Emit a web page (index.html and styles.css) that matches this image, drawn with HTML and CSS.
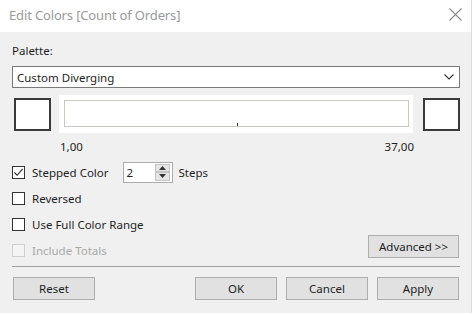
FILE: index.html
```html
<!DOCTYPE html>
<html>
<head>
    <meta charset="utf-8">
    <title>Edit Colors</title>
    <link rel="stylesheet" href="styles.css">
</head>
<body>
    <div class="window">
        <div class="titlebar">
            <span class="title">Edit Colors [Count of Orders]</span>
            <svg class="close" width="13" height="13" viewBox="0 0 13 13">
                <path d="M0.5 0.5 L12.5 12.5 M12.5 0.5 L0.5 12.5" stroke="#8a8a8a" stroke-width="1.1" fill="none"/>
            </svg>
        </div>

        <div class="content">
            <div class="label">Palette:</div>
            <div class="select">
                <span>Custom Diverging</span>
                <svg width="10" height="6" viewBox="0 0 10 6">
                    <path d="M0.5 0.5 L5 5 L9.5 0.5" stroke="#333" stroke-width="1.1" fill="none"/>
                </svg>
            </div>

            <div class="ramp-row">
                <div class="swatch"></div>
                <div class="ramp">
                    <div class="ramp-inner"><span class="tick"></span></div>
                </div>
                <div class="swatch"></div>
            </div>

            <div class="range-labels">
                <span>1,00</span>
                <span>37,00</span>
            </div>

            <div class="option stepped">
                <span class="box checked">
                    <svg width="11" height="11" viewBox="0 0 11 11">
                        <path d="M1.5 5.5 L4.2 8.3 L9.6 1.8" stroke="#222" stroke-width="1.1" fill="none"/>
                    </svg>
                </span>
                <span>Stepped Color</span>
                <div class="spin">
                    <span class="spin-value">2</span>
                    <div class="spin-buttons">
                        <span class="spin-btn"><svg width="7" height="4" viewBox="0 0 7 4"><path d="M0 4 L3.5 0 L7 4 Z" fill="#333"/></svg></span>
                        <span class="spin-btn"><svg width="7" height="4" viewBox="0 0 7 4"><path d="M0 0 L3.5 4 L7 0 Z" fill="#333"/></svg></span>
                    </div>
                </div>
                <span>Steps</span>
            </div>

            <div class="option">
                <span class="box"></span>
                <span>Reversed</span>
            </div>

            <div class="option">
                <span class="box"></span>
                <span>Use Full Color Range</span>
            </div>

            <div class="option last">
                <div class="disabled">
                    <span class="box"></span>
                    <span>Include Totals</span>
                </div>
                <button class="btn advanced">Advanced &gt;&gt;</button>
            </div>

            <div class="separator"></div>

            <div class="buttons">
                <button class="btn">Reset</button>
                <div class="spacer"></div>
                <button class="btn">OK</button>
                <button class="btn">Cancel</button>
                <button class="btn">Apply</button>
            </div>
        </div>
    </div>
</body>
</html>
```

FILE: styles.css
```css
body {
    margin: 0;
    background: #ffffff;
    font-family: 'Noto Sans', 'Open Sans', sans-serif;
    font-size: 11.5px;
    color: #1e1e1e;
}

.window {
    width: 471px;
    height: 313px;
    display: flex;
    flex-direction: column;
    background: #f0f0f0;
    border-right: 1px solid #dcdcdc;
}

.titlebar {
    height: 32px;
    background: #ffffff;
    display: flex;
    align-items: center;
    justify-content: space-between;
    padding: 0 9px 0 9px;
}

.title {
    font-size: 13px;
    letter-spacing: -0.15px;
    color: #9a9a9a;
    margin-top: -2px;
}

.close {
    margin-top: -3px;
}

.content {
    display: flex;
    flex-direction: column;
    padding: 0 11px 0 12px;
}

.label {
    height: 16px;
    line-height: 16px;
    margin-top: 11px;
}

.select {
    margin-top: 7px;
    height: 20px;
    border: 1px solid #7a7a7a;
    background: #ffffff;
    display: flex;
    align-items: center;
    justify-content: space-between;
    padding: 0 5px 0 4px;
}

.ramp-row {
    display: flex;
    align-items: center;
    margin-top: 7px;
    height: 38px;
}

.swatch {
    width: 33px;
    height: 29px;
    border: 2px solid #3a3a3a;
    background: #ffffff;
}

.swatch:first-child {
    margin-left: 2px;
}

.ramp {
    width: 345px;
    height: 27px;
    background: #ffffff;
    padding: 5px 4px 6px 5px;
    margin: 0 10px 0 8px;
}

.ramp-inner {
    height: 25px;
    border: 1px solid #c9c9bf;
    position: relative;
}

.tick {
    position: absolute;
    left: 172px;
    bottom: 0;
    width: 1px;
    height: 3px;
    background: #333;
}

.range-labels {
    display: flex;
    justify-content: space-between;
    height: 16px;
    line-height: 16px;
    margin-top: 6px;
    padding-left: 48px;
    width: 354px;
}

.option {
    display: flex;
    align-items: center;
    height: 26px;
}

.stepped {
    margin-top: 4px;
}

.box {
    width: 11px;
    height: 11px;
    border: 1px solid #333;
    background: #ffffff;
    margin-right: 7px;
    display: flex;
    align-items: center;
    justify-content: center;
}

.spin {
    margin: 0 6px 0 14px;
    width: 48px;
    height: 19px;
    border: 1px solid #acacac;
    background: #ffffff;
    display: flex;
    justify-content: space-between;
}

.spin-value {
    padding-left: 3px;
    line-height: 19px;
}

.spin-buttons {
    display: flex;
    flex-direction: column;
    padding: 1px 2px 1px 0;
}

.spin-btn {
    width: 13px;
    height: 8px;
    background: #e6e6e6;
    border: 1px solid #c4c4c4;
    display: flex;
    align-items: center;
    justify-content: center;
}

.last {
    justify-content: space-between;
    align-items: flex-start;
}

.disabled {
    display: flex;
    align-items: center;
    height: 26px;
    color: #a8a8a8;
}

.disabled .box {
    border-color: #cfcfcf;
    background: #f4f4f4;
}

.btn {
    font-family: inherit;
    font-size: 11.5px;
    color: #1e1e1e;
    background: #e1e1e1;
    border: 1px solid #adadad;
    width: 82px;
    height: 23px;
    padding: 0;
    margin: 0;
}

.advanced {
    width: 91px;
    margin-top: -2px;
    margin-right: 1px;
}

.separator {
    margin-top: 3px;
    height: 1px;
    background: #a0a0a0;
}

.buttons {
    display: flex;
    margin-top: 10px;
    gap: 9px;
}

.buttons .btn:first-child {
    margin-left: 1px;
}

.buttons .btn:last-child {
    margin-right: 1px;
}

.spacer {
    flex: 1;
}
```
